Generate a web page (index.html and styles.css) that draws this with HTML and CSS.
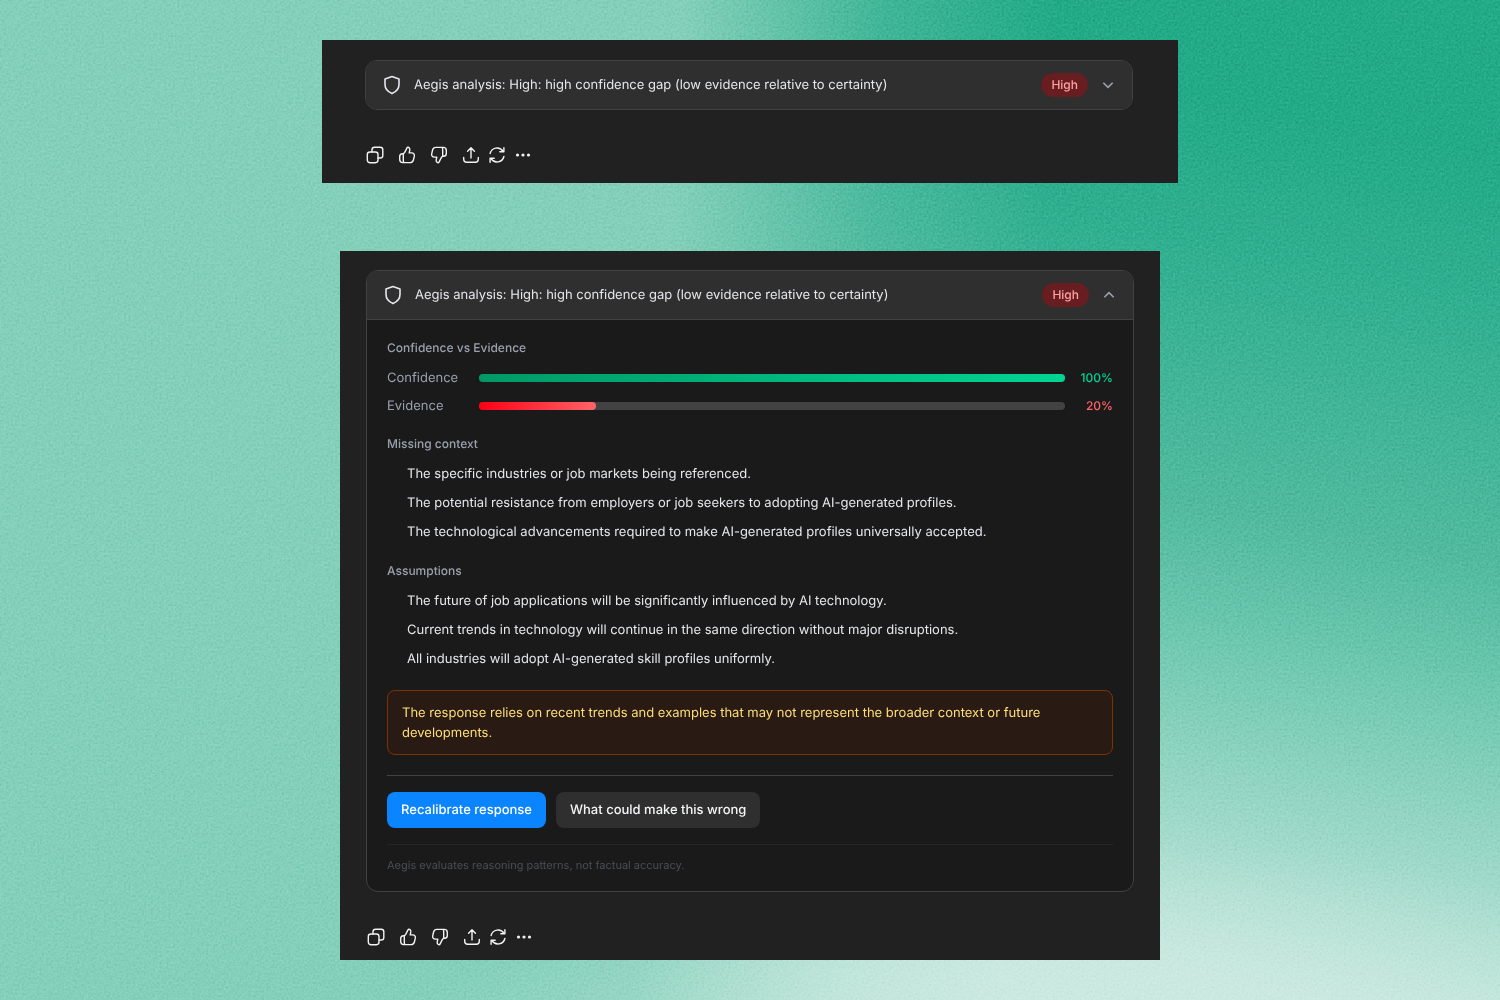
FILE: index.html
```
<!DOCTYPE html>
<html lang="en">
<head>
  <meta charset="UTF-8">
  <meta name="viewport" content="width=device-width, initial-scale=1">
  <title>Aegis analysis</title>
  <link rel="stylesheet" href="styles.css">
</head>
<body>
  <!-- shared icons and the grain filter -->
  <svg class="defs" width="0" height="0" aria-hidden="true">
    <symbol id="shield" viewBox="0 0 20 20">
      <path d="M10 1.5 L17 4.1 V9.5 C17 13.8 14.2 16.7 10 18.6 C5.800 16.7 3 13.8 3 9.500 V4.100 Z"/>
    </symbol>
    <symbol id="chevron" viewBox="0 0 16 16">
      <path d="M3.300 5.700 L8 10.300 L12.700 5.700"/>
    </symbol>
    <symbol id="copy" viewBox="0 0 20 20">
      <rect x="2.300" y="7" width="10.700" height="10.700" rx="2.600"/>
      <path d="M7 7 V4.800 A2.600 2.600 0 0 1 9.600 2.200 H15.200 A2.600 2.600 0 0 1 17.800 4.800 V10.400 A2.600 2.600 0 0 1 15.200 13 H13"/>
    </symbol>
    <symbol id="thumb" viewBox="0 0 20 20">
      <path d="M6.800 17.600 H13.200 C14.900 17.600 16 16.600 16.400 15 L17.300 11.200 C17.700 9.300 16.600 7.900 14.700 7.900 H12.200 L12.800 4.900 C13 3.500 12.200 2.300 10.900 2.300 C10.500 2.300 10.200 2.500 10 2.900 L7.700 7.400 C7.200 8.300 6.600 8.700 5.800 8.700 H5.500 C4 8.700 2.700 9.900 2.700 11.500 V14.600 C2.700 16.300 4 17.600 5.700 17.600 H6.800 C6.400 16.900 6.300 16.100 6.300 15 V8.700"/>
    </symbol>
    <symbol id="share" viewBox="0 0 20 20">
      <path d="M10 13 V3 M6.600 6.200 L10 2.800 L13.400 6.200 M2.700 12.500 V14.300 A3 3 0 0 0 5.700 17.300 H14.300 A3 3 0 0 0 17.300 14.300 V12.500"/>
    </symbol>
    <symbol id="refresh" viewBox="0 0 20 20">
      <path d="M3.100 8.500 A7.100 7.100 0 0 1 16 6.300 M16.900 2.700 V6.800 H12.800 M16.900 11.500 A7.100 7.100 0 0 1 4 13.700 M3.100 17.300 V13.200 H7.200"/>
    </symbol>
    <symbol id="more" viewBox="0 0 20 20">
      <circle cx="4.500" cy="10" r="1.600"/>
      <circle cx="10" cy="10" r="1.600"/>
      <circle cx="15.500" cy="10" r="1.600"/>
    </symbol>
    <filter id="noise" color-interpolation-filters="sRGB">
      <feTurbulence type="fractalNoise" baseFrequency="0.45" numOctaves="2" stitchTiles="stitch"/>
      <feColorMatrix type="saturate" values="0"/>
      <feComponentTransfer>
        <feFuncA type="linear" slope="0" intercept="1"/>
      </feComponentTransfer>
    </filter>
  </svg>
  <svg class="grain" aria-hidden="true"><rect width="100%" height="100%" filter="url(#noise)"/></svg>

  <main>
    <section class="panel panel-closed">
      <article class="card">
        <button class="card-header" type="button" aria-expanded="false">
          <svg class="icon shield"><use href="#shield"/></svg>
          <span class="title">Aegis analysis: High: high confidence gap (low evidence relative to certainty)</span>
          <span class="badge">High</span>
          <svg class="chevron"><use href="#chevron"/></svg>
        </button>
      </article>
      <div class="actions">
        <button type="button" aria-label="Copy"><svg class="icon"><use href="#copy"/></svg></button>
        <button type="button" aria-label="Good response"><svg class="icon"><use href="#thumb"/></svg></button>
        <button type="button" aria-label="Bad response"><svg class="icon flip"><use href="#thumb"/></svg></button>
        <div class="actions-more">
          <button type="button" aria-label="Share"><svg class="icon"><use href="#share"/></svg></button>
          <button type="button" aria-label="Try again"><svg class="icon"><use href="#refresh"/></svg></button>
          <button type="button" aria-label="More"><svg class="icon dots"><use href="#more"/></svg></button>
        </div>
      </div>
    </section>

    <section class="panel panel-open">
      <article class="card">
        <button class="card-header" type="button" aria-expanded="true">
          <svg class="icon shield"><use href="#shield"/></svg>
          <span class="title">Aegis analysis: High: high confidence gap (low evidence relative to certainty)</span>
          <span class="badge">High</span>
          <svg class="chevron flip"><use href="#chevron"/></svg>
        </button>
        <div class="card-body">
          <section>
            <h2>Confidence vs Evidence</h2>
            <div class="meters">
              <div class="meter">
                <span>Confidence</span>
                <div class="track"><div class="fill green" style="width: 100%"></div></div>
                <span class="value green-text">100%</span>
              </div>
              <div class="meter">
                <span>Evidence</span>
                <div class="track"><div class="fill red" style="width: 20%"></div></div>
                <span class="value red-text">20%</span>
              </div>
            </div>
          </section>

          <section>
            <h2>Missing context</h2>
            <ul>
              <li>The specific industries or job markets being referenced.</li>
              <li>The potential resistance from employers or job seekers to adopting AI-generated profiles.</li>
              <li>The technological advancements required to make AI-generated profiles universally accepted.</li>
            </ul>
          </section>

          <section>
            <h2>Assumptions</h2>
            <ul>
              <li>The future of job applications will be significantly influenced by AI technology.</li>
              <li>Current trends in technology will continue in the same direction without major disruptions.</li>
              <li>All industries will adopt AI-generated skill profiles uniformly.</li>
            </ul>
          </section>

          <p class="warning">The response relies on recent trends and examples that may not represent the broader context or future developments.</p>

          <footer>
            <div class="buttons">
              <button class="btn btn-primary" type="button">Recalibrate response</button>
              <button class="btn" type="button">What could make this wrong</button>
            </div>
            <p class="note">Aegis evaluates reasoning patterns, not factual accuracy.</p>
          </footer>
        </div>
      </article>
      <div class="actions">
        <button type="button" aria-label="Copy"><svg class="icon"><use href="#copy"/></svg></button>
        <button type="button" aria-label="Good response"><svg class="icon"><use href="#thumb"/></svg></button>
        <button type="button" aria-label="Bad response"><svg class="icon flip"><use href="#thumb"/></svg></button>
        <div class="actions-more">
          <button type="button" aria-label="Share"><svg class="icon"><use href="#share"/></svg></button>
          <button type="button" aria-label="Try again"><svg class="icon"><use href="#refresh"/></svg></button>
          <button type="button" aria-label="More"><svg class="icon dots"><use href="#more"/></svg></button>
        </div>
      </div>
    </section>
  </main>
</body>
</html>
```

FILE: styles.css
```
* {
  box-sizing: border-box;
}

body {
  margin: 0;
  min-height: 100vh;
  position: relative;
  font-family: Inter, sans-serif;
  font-size: 13px;
  line-height: 20px;
  text-rendering: geometricPrecision;
  color: #e5e7eb;
  background:
    radial-gradient(ellipse 45% 22% at 72% 106%, rgba(206, 234, 225, 0.9) 0%, rgba(206, 234, 225, 0) 100%),
    linear-gradient(93deg, #84d0ba 0%, #84d0ba 44%, rgba(132, 208, 186, 0.3) 57%, rgba(132, 208, 186, 0) 68%),
    linear-gradient(191deg, #22ab88 0%, #22ab88 12%, #33b192 26%, #52bb9f 44%, #68c6ad 52%, #98d7c5 66%, #c8e8df 80%);
}

h2, p, ul {
  margin: 0;
  padding: 0;
}

button {
  font: inherit;
  color: inherit;
  text-rendering: inherit;
  border: 0;
  cursor: pointer;
}

.defs,
.grain {
  position: absolute;
}

.grain {
  inset: 0;
  width: 100%;
  height: 100%;
  mix-blend-mode: soft-light;
  opacity: 0.5;
}

main {
  position: relative;
  display: flex;
  flex-direction: column;
  align-items: center;
  gap: 68px;
  padding: 40px 20px;
}

.panel {
  width: 100%;
  background: #212121;
}

.panel-closed {
  max-width: 856px;
  padding: 20px 45px 18px 43px;
}

.panel-open {
  max-width: 820px;
  padding: 19px 26px 13px;
}

.card {
  border: 1px solid #424242;
  border-radius: 12px;
  background: #1a1a1a;
  overflow: hidden;
}

.card-header {
  display: flex;
  align-items: center;
  gap: 12px;
  width: 100%;
  min-height: 48px;
  padding: 12px 16px;
  background: #2f2f2f;
  text-align: left;
}

.title {
  flex: 1;
  line-height: 21px;
}

.badge {
  padding: 2px 10px;
  border-radius: 12px;
  background: #681d20;
  color: #ffa2a2;
  font-size: 12px;
  font-weight: 500;
}

.icon {
  display: block;
  width: 20px;
  height: 20px;
  fill: none;
  stroke: currentColor;
  stroke-width: 1.4;
  stroke-linecap: round;
  stroke-linejoin: round;
}

.shield {
  stroke-width: 1.6;
}

.chevron {
  width: 16px;
  height: 16px;
  fill: none;
  stroke: #99a1af;
  stroke-width: 1.6;
}

.flip {
  transform: rotate(180deg);
}

.dots {
  fill: currentColor;
  stroke: none;
}

.card-body {
  display: flex;
  flex-direction: column;
  gap: 20px;
  padding: 20px 20px 18px;
  border-top: 1px solid #424242;
}

h2 {
  margin-bottom: 12px;
  font-size: 12px;
  font-weight: 500;
  line-height: 16px;
  color: #99a1af;
}

.meters {
  display: flex;
  flex-direction: column;
  gap: 8px;
}

.meter {
  display: grid;
  grid-template-columns: 80px 1fr 36px;
  align-items: center;
  gap: 12px;
  color: #99a1af;
}

.track {
  height: 8px;
  border-radius: 4px;
  background: #424242;
}

.fill {
  height: 100%;
  border-radius: 4px;
}

.green {
  background: linear-gradient(to right, #009966, #00d492);
}

.red {
  background: linear-gradient(to right, #fb0015, #ff6467);
}

.value {
  font-size: 12px;
  font-weight: 500;
  text-align: right;
}

.green-text {
  color: #00d492;
}

.red-text {
  color: #ff6467;
}

ul {
  display: flex;
  flex-direction: column;
  gap: 8px;
  padding-left: 20px;
  list-style: none;
  line-height: 21px;
}

.warning {
  padding: 12px 14px 11px;
  border: 1px solid #7b3306;
  border-radius: 8px;
  background: #291a14;
  color: #ffdf75;
}

footer {
  padding-top: 16px;
  border-top: 1px solid #424242;
}

.buttons {
  display: flex;
  flex-wrap: wrap;
  gap: 10px;
  margin-bottom: 16px;
}

.btn {
  height: 36px;
  padding: 0 14px;
  border-radius: 8px;
  background: #2f2f2f;
  color: #f3f4f6;
  font-weight: 500;
}

.btn-primary {
  background: #0a84ff;
  color: #fff;
}

.note {
  padding-top: 12px;
  border-top: 1px solid #262626;
  font-size: 11px;
  line-height: 16px;
  color: #4a4d55;
}

.actions,
.actions-more {
  display: flex;
  gap: 12px;
}

.actions {
  margin-top: 35px;
  color: #f3f3f3;
}

.actions-more {
  gap: 6px;
}

.actions button {
  padding: 0;
  background: none;
}
```
